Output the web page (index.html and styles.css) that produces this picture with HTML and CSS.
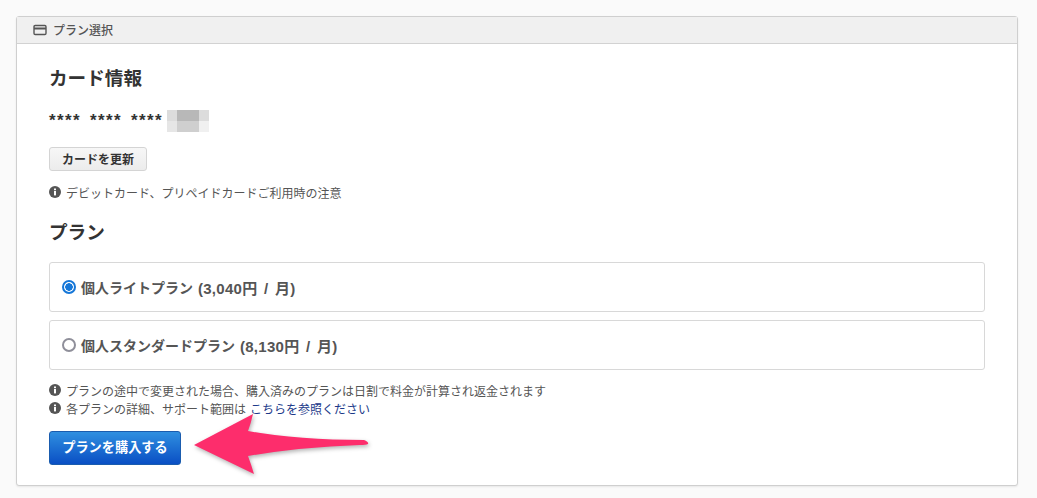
FILE: index.html
```html
<!DOCTYPE html>
<html lang="ja">
<head>
    <meta charset="UTF-8">
    <title>プラン選択</title>
    <link rel="stylesheet" href="styles.css">
</head>
<body>
    <div class="card">
        <div class="card-header">
            <svg class="card-icon" width="14" height="12" viewBox="0 0 14 12">
                <rect x="1" y="1.5" width="12" height="9" rx="1.2" fill="none" stroke="#555" stroke-width="1.4"/>
                <rect x="1" y="3.5" width="12" height="2" fill="#555"/>
            </svg>
            プラン選択
        </div>
        <div class="card-body">
            <h2 class="title-card">カード情報</h2>
            <div class="card-number">
                <span>****</span><span>****</span><span>****</span>
                <div class="mosaic">
                    <i class="m1"></i><i class="m2"></i><i class="m2"></i><i class="m1 m0"></i>
                    <i class="m0"></i><i class="m3"></i><i class="m3"></i><i class="m4"></i>
                </div>
            </div>
            <button class="btn">カードを更新</button>
            <p class="note note-first"><svg class="info" viewBox="0 0 12 12"><circle cx="6" cy="6" r="6" fill="#555"/><rect x="5" y="5" width="2" height="4.4" fill="#fff"/><rect x="5" y="2.5" width="2" height="1.7" fill="#fff"/></svg>デビットカード、プリペイドカードご利用時の注意</p>

            <h2 class="title-plan">プラン</h2>
            <label class="plan">
                <span class="radio checked"></span>個人ライトプラン&nbsp;<span class="price">(3,040円 / 月)</span>
            </label>
            <label class="plan">
                <span class="radio"></span>個人スタンダードプラン&nbsp;<span class="price">(8,130円 / 月)</span>
            </label>

            <div class="notes">
                <p class="note"><svg class="info" viewBox="0 0 12 12"><circle cx="6" cy="6" r="6" fill="#555"/><rect x="5" y="5" width="2" height="4.4" fill="#fff"/><rect x="5" y="2.5" width="2" height="1.7" fill="#fff"/></svg>プランの途中で変更された場合、購入済みのプランは日割で料金が計算され返金されます</p>
                <p class="note"><svg class="info" viewBox="0 0 12 12"><circle cx="6" cy="6" r="6" fill="#555"/><rect x="5" y="5" width="2" height="4.4" fill="#fff"/><rect x="5" y="2.5" width="2" height="1.7" fill="#fff"/></svg>各プランの詳細、サポート範囲は <a href="#">こちらを参照ください</a></p>
            </div>
            <button class="btn-buy">プランを購入する</button>
        </div>
        <svg class="arrow" width="190" height="70" viewBox="0 0 190 70">
            <path d="M4 31 L63 0 Q61 9 58 17 Q110 26 174 26 Q179 28 178 30 Q176 31 170 31 Q110 33 58 42 Q61 50 64 60 Z" fill="#fd2d6c"/>
        </svg>
    </div>
</body>
</html>
```

FILE: styles.css
```css
* {
    box-sizing: border-box;
}
body {
    margin: 0;
    padding: 16px 19px 12px 16px;
    background: #fafafa;
    font-family: "Liberation Sans", "Noto Sans CJK JP", sans-serif;
    color: #333;
}
.card {
    position: relative;
    height: 470px;
    background: white;
    border: 1px solid #cfcfcf;
    border-radius: 3px;
    box-shadow: 0 1px 2px rgba(0,0,0,0.08);
}
.card-header {
    display: flex;
    align-items: center;
    height: 27px;
    padding: 0 0 1px 16px;
    background: #f0f0f0;
    border-bottom: 1px solid #d2d2d2;
    font-size: 12px;
    font-weight: 500;
    color: #555;
}
.card-icon {
    margin-right: 6px;
}
.card-body {
    padding: 0 32px;
}
h2 {
    margin: 0;
    font-size: 18.6px;
    line-height: 26px;
    font-weight: 700;
    color: #333;
}
.title-card {
    padding-top: 22px;
}
.card-number {
    display: flex;
    align-items: center;
    gap: 9px;
    height: 22px;
    margin-top: 18px;
    padding-bottom: 1px;
    font-size: 17px;
    font-weight: 700;
}
.card-number span {
    width: 32px;
    letter-spacing: 1.4px;
}
.mosaic {
    display: grid;
    grid-template-columns: 10px 12px 10px 10px;
    grid-template-rows: 11px 11px;
    margin-left: -5px;
}
.m0 { background: #e6e6e6; }
.m1 { background: #dcdcdc; }
.m2 { background: #b8b8b8; }
.m3 { background: #cfcfcf; }
.m4 { background: #f0f0f0; }
.btn {
    display: block;
    width: 98px;
    height: 24px;
    margin-top: 15px;
    padding: 0 0 2px;
    background: linear-gradient(#f7f7f7, #ececec);
    border: 1px solid #d4d4d4;
    border-radius: 3px;
    font-family: inherit;
    font-size: 12px;
    font-weight: 700;
    color: #333;
}
.note {
    display: flex;
    align-items: center;
    margin: 0;
    height: 18px;
    font-size: 12px;
    color: #555;
}
.note-first {
    margin-top: 12px;
}
.info {
    width: 12px;
    height: 12px;
    margin-right: 5px;
    flex-shrink: 0;
}
.note a {
    margin-left: 4px;
    color: #1c3a8a;
    text-decoration: none;
}
.title-plan {
    margin-top: 19px;
}
.plan {
    display: flex;
    align-items: center;
    height: 50px;
    margin-top: 8px;
    padding-left: 12px;
    border: 1px solid #d8d8d8;
    border-radius: 3px;
    font-size: 14px;
    font-weight: 700;
    color: #555;
}
.title-plan + .plan {
    margin-top: 16px;
}
.price {
    font-size: 15px;
    letter-spacing: 0.3px;
    word-spacing: 2px;
    margin-left: 1px;
}
.radio {
    width: 14px;
    height: 14px;
    margin-right: 5px;
    border: 2px solid #8f8f9a;
    border-radius: 50%;
    background: white;
}
.radio.checked {
    border-color: #1677d8;
    background: radial-gradient(circle, #1677d8 0 3.5px, white 4px);
}
.notes {
    margin-top: 11px;
}
.btn-buy {
    display: block;
    width: 132px;
    height: 34px;
    margin-top: 14px;
    padding: 0 0 3px;
    background: linear-gradient(#2f8fe0, #0a4fc4);
    border: 1px solid #1a5cae;
    border-radius: 3px;
    font-family: inherit;
    font-size: 13.2px;
    font-weight: 700;
    color: white;
}
.arrow {
    position: absolute;
    left: 173px;
    top: 397px;
    filter: drop-shadow(1px 2px 2px rgba(0,0,0,0.3));
}
```
